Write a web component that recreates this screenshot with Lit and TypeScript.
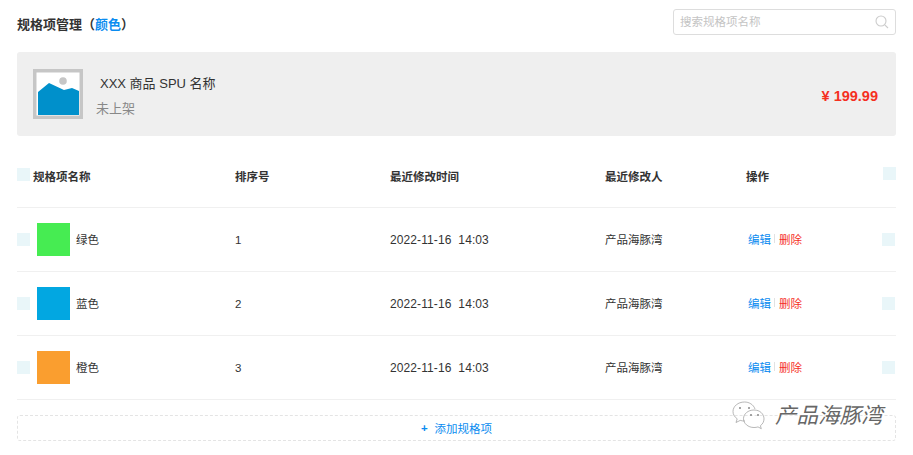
import { LitElement, html, css } from "lit";
import { customElement } from "lit/decorators.js";

const rows = [
  { name: "绿色", color: "#46ec52", order: 1 },
  { name: "蓝色", color: "#02a7e1", order: 2 },
  { name: "橙色", color: "#fa9e2f", order: 3 },
];

@customElement("app-root")
export class AppRoot extends LitElement {
  static styles = css`
    :host {
      display: block;
      position: relative;
      width: 913px;
      height: 455px;
      overflow: hidden;
      background: #fff;
      font-family: "Liberation Sans", "Noto Sans CJK SC", sans-serif;
      color: #333;
      font-size: 11.5px;
    }
    .page { padding: 9px 17px 0; display: flex; flex-direction: column; }
    .top { display: flex; justify-content: space-between; align-items: center; height: 26px; margin-bottom: 17px; }
    .title { font-size: 13px; font-weight: 700; color: #333; padding-top: 3px; }
    .blue { color: #0a8cf0; }
    .search {
      box-sizing: border-box; width: 223px; height: 26px;
      border: 1px solid #ddd; border-radius: 3px;
      display: flex; align-items: center; justify-content: space-between;
      padding: 0 6px; color: #c4c4c4; font-size: 11.500px;
    }
    .search span { margin-top: -2px; }
    .card {
      height: 84px; background: #efefef; border-radius: 3px;
      display: flex; align-items: center; padding: 0 18px 0 16px; box-sizing: border-box;
    }
    .thumb { width: 50px; height: 50px; flex: none; margin-right: 13px; display: block; }
    .info { flex: 1; display: flex; flex-direction: column; gap: 6px; padding-top: 4px; }
    .pname { font-size: 13px; color: #333; padding-left: 4px; line-height: 19px; }
    .status { font-size: 13px; color: #888; line-height: 19px; }
    .price { font-size: 14.500px; font-weight: 700; color: #f5301f; padding-top: 4px; }
    .row {
      display: grid;
      grid-template-columns: 218px 155px 215px 141px 137px 13px;
      height: 64px; align-items: center;
      border-bottom: 1px solid #f0f0f0; box-sizing: border-box;
      color: #333;
    }
    .row.head { height: 72px; font-weight: 700; padding-top: 8px; }
    .row.head .namecell { gap: 3px; }
    .namecell { display: flex; align-items: center; }
    .check { width: 13px; height: 13px; background: #e9f6f9; flex: none; display: block; }
    .swatch { width: 33px; height: 33px; margin: 0 6px 0 7px; flex: none; }
    .right-check { margin-left: -1px; }
    .head .right-check { margin-left: 0; margin-top: -5px; }
    .head .namecell .check { margin-top: -3px; }
    .date { font-size: 12px; letter-spacing: 0.1px; }
    .cjk { margin-top: -2px; }
    .ops { display: flex; align-items: center; padding-left: 2px; }
    .edit { color: #0a8cf0; }
    .sep { width: 1px; height: 9px; background: #e2e2e2; margin: 0 4px 0 3px; }
    .del { color: #f5301f; }
    .add {
      margin-top: 15px; height: 26px; box-sizing: border-box;
      border: 1px dashed #e4e4e4; border-radius: 3px;
      display: flex; align-items: center; justify-content: center; gap: 7px;
      color: #0a8cf0;
    }
    .plus { font-weight: 700; }
    .mark {
      position: absolute; left: 731px; top: 398px;
      display: flex; align-items: center; gap: 8px;
      font-size: 21.500px; color: #666; line-height: 36px;
    }
    .mark span { font-style: italic; text-shadow: 0 0 2px #fff, 0 0 2px #fff; }
    .mark svg { display: block; }
  `;

  private check(extra = "") {
    return html`<i class="check ${extra}"></i>`;
  }

  render() {
    return html`
      <div class="page">
        <div class="top">
          <div class="title">规格项管理（<span class="blue">颜色</span>）</div>
          <div class="search">
            <span>搜索规格项名称</span>
            <svg width="14" height="14" viewBox="0 0 14 14" fill="none" stroke="#ccc" stroke-width="1.1">
              <circle cx="6" cy="6" r="5"></circle>
              <path d="M9.8 9.8 13 13"></path>
            </svg>
          </div>
        </div>
        <div class="card">
          <svg class="thumb" viewBox="0 0 50 50">
            <rect width="50" height="50" fill="#c6c6c6"></rect>
            <rect x="3.500" y="3.500" width="43" height="43" fill="#fff"></rect>
            <circle cx="30" cy="12" r="3.800" fill="#c6c6c6"></circle>
            <path d="M5 23 16 14 31 21 39 19 46 22V46H5Z" fill="#0090cb"></path>
          </svg>
          <div class="info">
            <div class="pname">XXX 商品 SPU 名称</div>
            <div class="status">未上架</div>
          </div>
          <div class="price">¥ 199.99</div>
        </div>
        <div class="row head">
          <div class="namecell">${this.check()}<span>规格项名称</span></div>
          <div>排序号</div>
          <div>最近修改时间</div>
          <div>最近修改人</div>
          <div>操作</div>
          ${this.check("right-check")}
        </div>
        ${rows.map(
          (r) => html`
            <div class="row">
              <div class="namecell">
                ${this.check()}
                <div class="swatch" style="background:${r.color}"></div>
                <span class="cjk">${r.name}</span>
              </div>
              <div>${r.order}</div>
              <div class="date">2022-11-16&nbsp;&nbsp;14:03</div>
              <div class="cjk">产品海豚湾</div>
              <div class="ops cjk"><span class="edit">编辑</span><i class="sep"></i><span class="del">删除</span></div>
              ${this.check("right-check")}
            </div>
          `
        )}
        <div class="add"><span class="plus">+</span><span>添加规格项</span></div>
      </div>
      <div class="mark">
        <svg width="36" height="32" viewBox="0 0 36 32" fill="none" stroke="#999" stroke-width="0.7">
          <path d="M24 9C22.500 4.500 18 2 13.500 2 7 2 2 6.300 2 11.500c0 3 1.600 5.500 4.200 7.300L5 22.500l4.200-2.100c1.500.4 3 .7 4.800.6"></path>
          <path d="M23 10c-6 0-10.500 4-10.500 8.700S17 27.500 23 27.500c1.500 0 2.800-.2 4-.6l3.300 1.800-.9-3c2.300-1.700 3.600-4 3.600-6.800C33 14 29 10 23 10Z"></path>
          <circle cx="9" cy="8" r="1" fill="#888" stroke="none"></circle>
          <circle cx="18" cy="8" r="1" fill="#888" stroke="none"></circle>
          <circle cx="20" cy="15" r="1" fill="#888" stroke="none"></circle>
          <circle cx="27" cy="15" r="1" fill="#888" stroke="none"></circle>
        </svg>
        <span>产品海豚湾</span>
      </div>
    `;
  }
}
